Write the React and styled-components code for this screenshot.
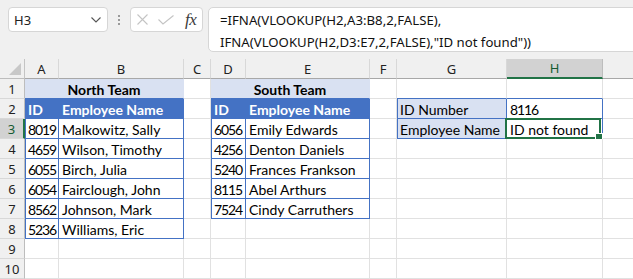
import React from "react";
import styled, { createGlobalStyle } from "styled-components";

const BLUE = "#4472c4";
const LIGHT = "#d9e1f2";
const GRID = "#e1e1e1";
const GREEN = "#217346";
const CHROME = "#f0f0f0";

const COLS = ["A", "B", "C", "D", "E", "F", "G", "H", "I"];

const NORTH = [
  ["8019", "Malkowitz, Sally"],
  ["4659", "Wilson, Timothy"],
  ["6055", "Birch, Julia"],
  ["6054", "Fairclough, John"],
  ["8562", "Johnson, Mark"],
  ["5236", "Williams, Eric"],
];

const SOUTH = [
  ["6056", "Emily Edwards"],
  ["4256", "Denton Daniels"],
  ["5240", "Frances Frankson"],
  ["8115", "Abel Arthurs"],
  ["7524", "Cindy Carruthers"],
];

function tableCells(out, r, first, second, title, rows) {
  if (r === 1) {
    out[first] = { text: title, span: 2, fill: LIGHT, bold: true, center: true, br: LIGHT, bb: BLUE };
  }
  if (r === 2) {
    out[first] = { text: "ID", fill: BLUE, bold: true, color: "#fff", br: BLUE, bb: BLUE };
    out[second] = { text: "Employee Name", fill: BLUE, bold: true, color: "#fff", br: BLUE, bb: BLUE };
  }
  const row = rows[r - 3];
  if (r >= 3 && row) {
    out[first] = { text: row[0], num: true, br: BLUE, bb: BLUE, bl: BLUE };
    out[second] = { text: row[1], br: BLUE, bb: BLUE };
  }
}

function buildRow(r) {
  const out = {};
  tableCells(out, r, "A", "B", "North Team", NORTH);
  tableCells(out, r, "D", "E", "South Team", SOUTH);
  if (r === 1) {
    out.G = { bb: BLUE };
    out.H = { bb: BLUE };
  }
  if (r === 2) {
    out.G = { text: "ID Number", fill: LIGHT, br: BLUE, bb: BLUE, bl: BLUE };
    out.H = { text: "8116", num: true, br: BLUE, bb: BLUE };
  }
  if (r === 3) {
    out.G = { text: "Employee Name", fill: LIGHT, br: BLUE, bb: BLUE, bl: BLUE };
    out.H = { text: "ID not found", br: BLUE, bb: BLUE, active: true };
  }
  return out;
}

const GlobalStyle = createGlobalStyle`
  html, body {
    margin: 0;
    padding: 0;
    background: #fff;
    overflow: hidden;
  }
`;

const Window = styled.div`
  width: 633px;
  height: 279px;
  overflow: hidden;
  background: ${CHROME};
`;

const FormulaBar = styled.div`
  height: 59px;
  box-sizing: border-box;
  display: flex;
  align-items: flex-start;
  padding: 7px 0 0 8px;
  font-family: "Noto Sans", "Open Sans", sans-serif;
`;

const NameBox = styled.div`
  width: 100px;
  flex: none;
  height: 25px;
  box-sizing: border-box;
  display: flex;
  align-items: center;
  justify-content: space-between;
  padding: 0 6px 0 5px;
  background: #fff;
  border: 1px solid #d6d6d6;
  border-radius: 4px;
  font-size: 13px;
  color: #222;
`;

const Grip = styled.div`
  width: 22px;
  flex: none;
  height: 25px;
  display: flex;
  flex-direction: column;
  align-items: center;
  justify-content: center;
  gap: 2px;

  span {
    width: 2px;
    height: 2px;
    background: #9a9a9a;
  }
`;

const ActionBox = styled.div`
  width: 73px;
  flex: none;
  height: 25px;
  box-sizing: border-box;
  display: flex;
  align-items: center;
  gap: 10px;
  padding-left: 6px;
  background: #fff;
  border: 1px solid #d6d6d6;
  border-radius: 4px;
`;

const Fx = styled.span`
  font-family: "Liberation Serif", "DejaVu Serif", serif;
  font-style: italic;
  font-size: 17px;
  color: #3b3b3b;
  margin-left: 1px;
  letter-spacing: -0.5px;
`;

const FormulaBox = styled.div`
  flex: none;
  width: 450px;
  height: 45px;
  box-sizing: border-box;
  margin-left: 5px;
  padding: 1px 0 0 11px;
  background: #fff;
  border: 1px solid #d6d6d6;
  border-radius: 5px;
  font-size: 13.2px;
  line-height: 22px;
  color: #111;
  white-space: nowrap;
`;

const Sheet = styled.div`
  display: grid;
  grid-template-columns: 25px 34px 125px 27px 35px 124px 27px 110px 96px 64px;
  grid-auto-rows: 20px;
  background: #fff;
`;

const Corner = styled.div`
  box-sizing: border-box;
  background: ${CHROME};
  border-right: 1px solid #c4c4c4;
  border-bottom: 1px solid #bdbdbd;
  display: flex;
  align-items: flex-end;
  justify-content: flex-end;
  padding: 0 3px 3px 0;
`;

const ColHead = styled.div`
  box-sizing: border-box;
  display: flex;
  align-items: center;
  justify-content: center;
  background: ${(p) => (p.$active ? "#d2d2d2" : CHROME)};
  border-right: 1px solid ${(p) => (p.$active ? "#bdbdbd" : "#d8d8d8")};
  border-bottom: ${(p) => (p.$active ? `2px solid ${GREEN}` : "1px solid #a8a8a8")};
  font-family: "Noto Sans", "Open Sans", sans-serif;
  font-size: 13px;
  color: ${(p) => (p.$active ? "#155a31" : "#222")};
`;

const RowHead = styled.div`
  box-sizing: border-box;
  display: flex;
  align-items: center;
  justify-content: center;
  background: ${(p) => (p.$active ? "#d2d2d2" : CHROME)};
  border-right: ${(p) => (p.$active ? `2px solid ${GREEN}` : "1px solid #bdbdbd")};
  border-bottom: 1px solid #d8d8d8;
  font-family: "Noto Sans", "Open Sans", sans-serif;
  font-size: 13px;
  color: ${(p) => (p.$active ? "#155a31" : "#222")};
`;

const Cell = styled.div`
  grid-column: span ${(p) => p.$span || 1};
  position: relative;
  box-sizing: border-box;
  padding: 2px 3px 0;
  background: ${(p) => p.$fill || "#fff"};
  border-right: 1px solid ${(p) => p.$br || GRID};
  border-bottom: 1px solid ${(p) => p.$bb || GRID};
  box-shadow: ${(p) => (p.$bl ? `inset 1px 0 0 ${p.$bl}` : "none")};
  color: ${(p) => p.$color || "#000"};
  font-family: Lato, "Liberation Sans", sans-serif;
  font-size: 14px;
  font-weight: ${(p) => (p.$bold ? 700 : 400)};
  letter-spacing: ${(p) => (p.$num ? "-1.1px" : "0")};
  text-align: ${(p) => (p.$center ? "center" : "left")};
  line-height: 18px;
  white-space: nowrap;
`;

const Selection = styled.div`
  position: absolute;
  left: -2px;
  top: -1px;
  right: 1px;
  bottom: -1px;
  border: 2px solid ${GREEN};
  pointer-events: none;
`;

const FillHandle = styled.div`
  position: absolute;
  right: -4px;
  bottom: -4px;
  width: 6px;
  height: 6px;
  background: ${GREEN};
  border: 1px solid #fff;
`;

const ActiveCol = "H";
const ActiveRow = 3;
// column I is only partly on screen, so its letter falls outside the window
const HiddenLabels = ["I"];

export default function App() {
  const rows = [];
  for (let r = 1; r <= 10; r++) {
    const spec = buildRow(r);
    const cells = [
      <RowHead key={`h${r}`} $active={r === ActiveRow}>
        {r}
      </RowHead>,
    ];
    let skip = 0;
    COLS.forEach((col) => {
      if (skip > 0) {
        skip--;
        return;
      }
      const s = spec[col] || {};
      if (s.span) skip = s.span - 1;
      cells.push(
        <Cell
          key={`${col}${r}`}
          $span={s.span}
          $fill={s.fill}
          $br={s.br}
          $bb={s.bb}
          $bl={s.bl}
          $color={s.color}
          $bold={s.bold}
          $center={s.center}
          $num={s.num}
        >
          {s.text}
          {s.active && (
            <Selection>
              <FillHandle />
            </Selection>
          )}
        </Cell>
      );
    });
    rows.push(...cells);
  }

  return (
    <Window>
      <GlobalStyle />
      <FormulaBar>
        <NameBox>
          <span>H3</span>
          <svg width="10" height="6" viewBox="0 0 10 6">
            <path d="M0.5 0.5 L5 5 L9.5 0.5" fill="none" stroke="#555" strokeWidth="1.1" />
          </svg>
        </NameBox>
        <Grip>
          <span />
          <span />
          <span />
        </Grip>
        <ActionBox>
          <svg width="11" height="11" viewBox="0 0 11 11">
            <path d="M0.5 0.5 L10.5 10.5 M10.5 0.5 L0.5 10.5" stroke="#c4c4c4" strokeWidth="1.1" />
          </svg>
          <svg width="16" height="10" viewBox="0 0 16 10">
            <path d="M0.5 4.5 L5 9 L15.5 0.5" fill="none" stroke="#c4c4c4" strokeWidth="1.1" />
          </svg>
          <Fx>fx</Fx>
        </ActionBox>
        <FormulaBox>
          <div>=IFNA(VLOOKUP(H2,A3:B8,2,FALSE),</div>
          <div>IFNA(VLOOKUP(H2,D3:E7,2,FALSE),"ID not found"))</div>
        </FormulaBox>
      </FormulaBar>
      <Sheet>
        <Corner>
          <svg width="12" height="12" viewBox="0 0 12 12">
            <path d="M12 0 L12 12 L0 12 Z" fill="#c8c8c8" />
          </svg>
        </Corner>
        {COLS.map((col) => (
          <ColHead key={col} $active={col === ActiveCol}>
            {HiddenLabels.includes(col) ? null : col}
          </ColHead>
        ))}
        {rows}
      </Sheet>
    </Window>
  );
}
